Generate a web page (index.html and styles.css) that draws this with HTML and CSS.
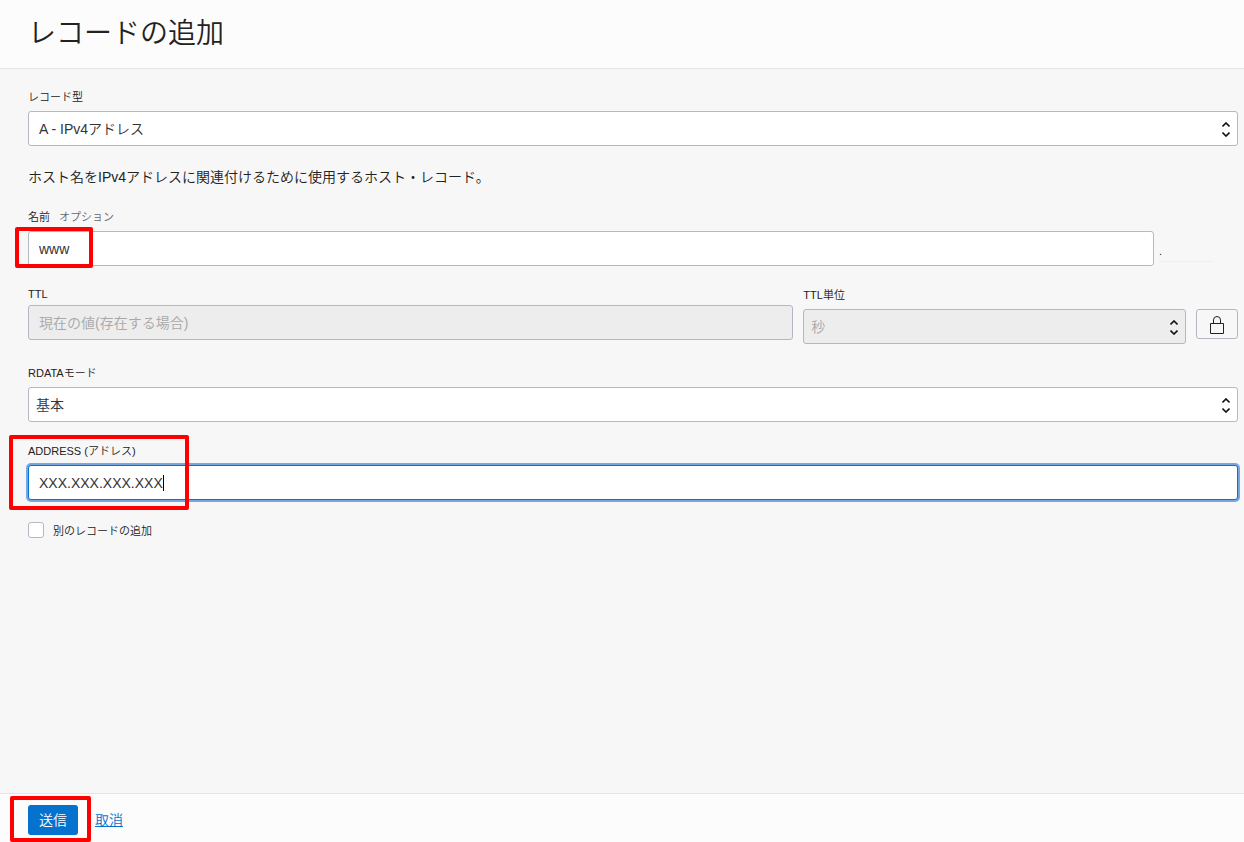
FILE: index.html
```html
<!DOCTYPE html>
<html lang="ja">
<head>
    <meta charset="UTF-8">
    <meta name="viewport" content="width=device-width, initial-scale=1.0">
    <title>レコードの追加</title>
    <link rel="stylesheet" href="styles.css">
</head>
<body>
    <header>
        <h1>レコードの追加</h1>
    </header>
    <main>
        <form id="record-form" class="record-form">
            <div class="field">
                <label for="record-type">レコード型</label>
                <div class="select-box">
                    <select id="record-type" class="record-type">
                        <option>A - IPv4アドレス</option>
                    </select>
                    <svg class="arrows" viewBox="0 0 8 15" aria-hidden="true"><path d="M.5 4.5 4 1l3.5 3.5M.5 10.5 4 14l3.5-3.5"/></svg>
                </div>
            </div>

            <p class="description">ホスト名をIPv4アドレスに関連付けるために使用するホスト・レコード。</p>

            <div class="field">
                <label for="name">名前 <span class="optional">オプション</span></label>
                <div class="name-row">
                    <input type="text" id="name" value="www">
                    <span class="zone"><span class="zone-name">.</span></span>
                </div>
                <div class="highlight highlight-name"></div>
            </div>

            <div class="ttl-row">
                <div class="field ttl">
                    <label for="ttl">TTL</label>
                    <input type="text" id="ttl" placeholder="現在の値(存在する場合)" disabled>
                </div>
                <div class="field">
                    <label for="ttl-unit">TTL単位</label>
                    <div class="select-box">
                        <select id="ttl-unit" disabled>
                            <option>秒</option>
                        </select>
                        <svg class="arrows" viewBox="0 0 8 15" aria-hidden="true"><path d="M.5 4.5 4 1l3.5 3.5M.5 10.5 4 14l3.5-3.5"/></svg>
                    </div>
                </div>
                <button type="button" class="lock-button" aria-label="ロック">
                    <svg viewBox="0 0 14 18" aria-hidden="true"><path d="M.5 7.5h13v10H.5zM3.5 7.5V4a3.5 3.5 0 0 1 7 0v3.5"/></svg>
                </button>
            </div>

            <div class="field">
                <label for="rdata-mode">RDATAモード</label>
                <div class="select-box">
                    <select id="rdata-mode">
                        <option>基本</option>
                    </select>
                    <svg class="arrows" viewBox="0 0 8 15" aria-hidden="true"><path d="M.5 4.5 4 1l3.5 3.5M.5 10.5 4 14l3.5-3.5"/></svg>
                </div>
            </div>

            <div class="field">
                <label for="address">ADDRESS (アドレス)</label>
                <input type="text" id="address" class="active" value="XXX.XXX.XXX.XXX">
                <span class="caret"></span>
                <div class="highlight highlight-address"></div>
            </div>

            <div class="checkbox-row">
                <input type="checkbox" id="add-another">
                <label for="add-another">別のレコードの追加</label>
            </div>
        </form>
    </main>
    <footer>
        <button type="submit" form="record-form" class="submit-button">送信</button>
        <a href="#">取消</a>
        <div class="highlight highlight-submit"></div>
    </footer>
</body>
</html>
```
FILE: styles.css
```css
* {
    box-sizing: border-box;
}

body {
    margin: 0;
    min-height: 100vh;
    display: flex;
    flex-direction: column;
    font-family: "Liberation Sans", "Noto Sans CJK JP", sans-serif;
    font-size: 14px;
    font-weight: 350;
    color: #222;
    background-color: #f7f7f7;
}

header {
    padding: 14px 28px;
    background-color: #fcfcfc;
    border-bottom: 1px solid #e4e4e4;
}

h1 {
    margin: 0;
    font-size: 28px;
    font-weight: 350;
    line-height: 40px;
}

main {
    flex: 1;
    padding: 14px 6px 14px 28px;
}

.record-form {
    display: flex;
    flex-direction: column;
    gap: 15px;
}

.field {
    position: relative;
}

.field label {
    display: flex;
    gap: 9px;
    font-size: 11px;
    line-height: 28px;
}

.optional {
    color: #666;
}

input[type="text"],
select {
    display: block;
    width: 100%;
    height: 35px;
    margin: 0;
    border: 1px solid #b3b8c4;
    border-radius: 3px;
    background-color: #fff;
    font-family: inherit;
    font-size: 14px;
    font-weight: inherit;
    color: #333;
    outline: none;
}

input[type="text"] {
    padding: 0 10px;
}

select {
    appearance: none;
    padding: 0 24px 0 7px;
}

select.record-type {
    padding-left: 10px;
}

input[type="text"]:disabled,
select:disabled {
    background-color: #ededed;
    color: #a8a8a8;
    opacity: 1;
}

input::placeholder {
    color: #a8a8a8;
}

input[type="text"].active {
    border-color: #0572ce;
    box-shadow: 0 0 0 2px #75a8e2;
}

.select-box {
    position: relative;
}

.arrows {
    position: absolute;
    top: 11px;
    right: 8px;
    width: 8px;
    height: 15px;
    fill: none;
    stroke: #111;
    stroke-width: 1.6;
    pointer-events: none;
}

.description {
    margin: 0;
    padding-top: 6px;
    line-height: 21px;
}

.name-row {
    display: flex;
}

.name-row input[type="text"] {
    flex: 1;
}

.zone {
    width: 84px;
    padding: 10px 24px 4px 5px;
}

.zone-name {
    display: block;
    border-bottom: 1px solid #efefef;
    font-size: 11px;
    line-height: 20px;
}

.ttl-row {
    display: grid;
    grid-template-columns: 2fr 1fr 42px;
    gap: 10px;
}

.ttl {
    padding-top: 2px;
}

.ttl label {
    line-height: 22px;
}

.lock-button {
    height: 30px;
    margin-top: 28px;
    padding: 2px 0 0;
    display: flex;
    justify-content: center;
    align-items: center;
    background-color: #f7f7f7;
    border: 1px solid #b3b8c4;
    border-radius: 3px;
}

.lock-button svg {
    width: 14px;
    height: 18px;
    fill: none;
    stroke: #222;
}

.caret {
    position: absolute;
    left: 135px;
    bottom: 9px;
    width: 1px;
    height: 16px;
    background-color: #000;
}

.checkbox-row {
    display: flex;
    align-items: center;
    gap: 9px;
    height: 30px;
    font-size: 11px;
}

.checkbox-row input {
    appearance: none;
    width: 16px;
    height: 16px;
    margin: 0;
    background-color: #fff;
    border: 1px solid #b3b8c4;
    border-radius: 3px;
}

footer {
    position: relative;
    display: flex;
    align-items: center;
    gap: 17px;
    height: 49px;
    padding: 4px 28px 0;
    background-color: #fcfcfc;
    border-top: 1px solid #e4e4e4;
}

.submit-button {
    height: 30px;
    padding: 0 11px 2px;
    background-color: #0572ce;
    border: none;
    border-radius: 3px;
    font-family: inherit;
    font-size: 14px;
    font-weight: inherit;
    color: #fff;
    cursor: pointer;
}

footer a {
    padding-bottom: 2px;
    color: #0572ce;
}

/* red frames round the steps to follow */
.highlight {
    position: absolute;
    border: 4px solid #f00;
    border-radius: 2px;
    pointer-events: none;
}

.highlight-name {
    left: -13px;
    bottom: -2px;
    width: 78px;
    height: 41px;
}

.highlight-address {
    left: -19px;
    bottom: -10px;
    width: 180px;
    height: 75px;
}

.highlight-submit {
    left: 10px;
    top: 2px;
    bottom: 0;
    width: 81px;
}
```
